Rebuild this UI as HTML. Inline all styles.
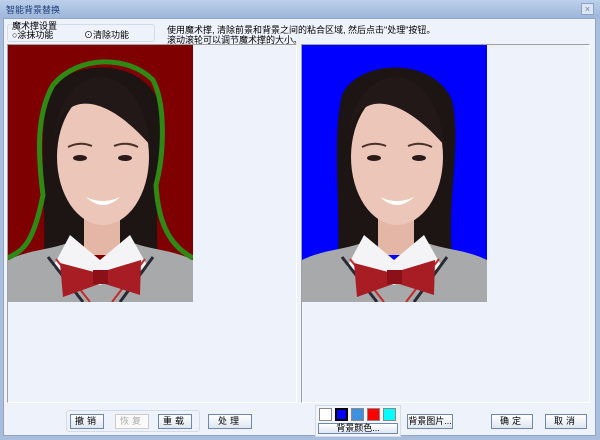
<!DOCTYPE html>
<html><head><meta charset="utf-8"><style>
*{margin:0;padding:0;box-sizing:border-box}
body{width:600px;height:440px;overflow:hidden;background:#a9bedc;font-family:"Liberation Sans","Noto Sans CJK SC",sans-serif;font-size:9px;line-height:10px;color:#000;position:relative}
.win{position:absolute;left:3px;top:18px;width:593px;height:418px;background:#eef2fa;border:1px solid #8fa6c8}
.title{position:absolute;left:0;top:0;width:600px;height:18px;background:linear-gradient(#bcd0ec,#9db6da);color:#1c3c78;font-size:9px;padding:5px 0 0 6px}
.x{position:absolute;right:6px;top:3px;width:13px;height:12px;border:1px solid #8da2c4;background:#dbe5f3;color:#6a7fa3;font-size:9px;line-height:10px;text-align:center}
.abs{position:absolute}
.panel{position:absolute;top:44px;height:359px;background:#eef2fa;border:1px solid #a0a0a0;border-right-color:#fff;border-bottom-color:#fff}
.btn{position:absolute;height:15px;border:1px solid #6f86ad;background:linear-gradient(#fff,#dfe6f1);font-size:9px;text-align:center;line-height:13px;letter-spacing:3px}
.sw{position:absolute;top:408px;width:13px;height:13px;border:1px solid #888}
</style></head><body>
<div class="title">智能背景替换<div class="x">×</div></div>
<div class="win"></div>
<div class="abs" style="left:7px;top:24px;width:148px;height:18px;border:1px solid #d4dcea;border-radius:3px"></div>
<div class="abs" style="left:12px;top:21px">魔术撑设置</div>
<div class="abs" style="left:12px;top:30px">○涂抹功能</div>
<div class="abs" style="left:84px;top:30px">⊙清除功能</div>
<div class="abs" style="left:167px;top:25px">使用魔术撑, 清除前景和背景之间的粘合区域, 然后点击"处理"按钮。</div>
<div class="abs" style="left:167px;top:35px">滚动滚轮可以调节魔术撑的大小。</div>
<svg width="0" height="0" style="position:absolute"><defs>
<g id="p">
<path d="M36 210 C38 150 30 90 40 50 C55 15 130 10 150 55 C160 100 145 150 150 210 L120 200 L70 200Z" fill="#1d1414"/>
<rect x="76" y="165" width="36" height="45" fill="#e3b6a6"/>
<ellipse cx="95" cy="112" rx="46" ry="68" fill="#ecc6b8"/>
<path d="M46 100 C48 50 90 40 142 100 C138 55 115 32 92 32 C60 35 46 70 46 100Z" fill="#221818"/>
<path d="M0 215 C20 205 40 205 60 198 L92 225 L125 198 C145 205 165 205 185 215 L185 257 L0 257Z" fill="#a7a9ab"/>
<path d="M62 190 L92 215 L122 190 L140 222 L92 240 L45 222Z" fill="#f4f4f6"/>
<path d="M40 212 L75 257 M145 212 L112 257" stroke="#2a2a35" stroke-width="3"/>
<path d="M48 214 L82 257 M137 214 L104 257" stroke="#c42a2a" stroke-width="2"/>
<path d="M52 218 L90 228 L133 215 L132 250 L94 238 L55 252Z" fill="#a81c24"/>
<rect x="85" y="225" width="15" height="14" fill="#8c1018"/>
<path d="M78 152 Q95 168 112 152 Q95 160 78 152Z" fill="#fff"/>
<ellipse cx="72" cy="113" rx="7" ry="3" fill="#2a1a1a"/><ellipse cx="117" cy="113" rx="7" ry="3" fill="#2a1a1a"/>
<path d="M60 102 Q72 96 84 101 M106 101 Q118 96 130 102" stroke="#4a3028" stroke-width="2" fill="none"/>
</g></defs></svg>
<div class="panel" style="left:7px;width:290px">
<svg class="abs" style="left:0;top:0" width="185" height="257"><rect width="185" height="257" fill="#7f0000"/><use href="#p"/>
<path d="M0 213 C15 205 25 200 35 150 C30 110 28 70 45 40 C70 10 120 10 145 35 C158 60 156 110 148 140 C150 175 160 200 185 213" stroke="#2e8a12" stroke-width="5" fill="none"/></svg>
</div>
<div class="panel" style="left:301px;width:289px">
<svg class="abs" style="left:0;top:0" width="185" height="257"><rect width="185" height="257" fill="#0000ff"/><use href="#p"/></svg>
</div>
<div class="abs" style="left:66px;top:410px;width:134px;height:22px;border:1px solid #d4dcea;border-radius:3px"></div>
<div class="btn" style="left:70px;top:414px;width:34px">撤销</div>
<div class="btn" style="left:115px;top:414px;width:34px;border-color:#ccc;background:#fafafa;color:#aaa">恢复</div>
<div class="btn" style="left:158px;top:414px;width:34px">重载</div>
<div class="btn" style="left:208px;top:414px;width:44px">处理</div>
<div class="abs" style="left:315px;top:405px;width:86px;height:32px;border:1px solid #d4dcea;background:#f3f5fa"></div>
<div class="sw" style="left:319px;background:#fff"></div>
<div class="sw" style="left:335px;background:#0000ff;border:2px solid #000"></div>
<div class="sw" style="left:351px;background:#4090e0"></div>
<div class="sw" style="left:367px;background:#ff0000"></div>
<div class="sw" style="left:383px;background:#00ffff"></div>
<div class="btn" style="left:318px;top:423px;width:80px;height:11px;line-height:9px;letter-spacing:0">背景颜色...</div>
<div class="btn" style="left:407px;top:414px;width:46px;letter-spacing:0">背景图片...</div>
<div class="btn" style="left:491px;top:414px;width:42px">确定</div>
<div class="btn" style="left:545px;top:414px;width:42px">取消</div>
</body></html>
